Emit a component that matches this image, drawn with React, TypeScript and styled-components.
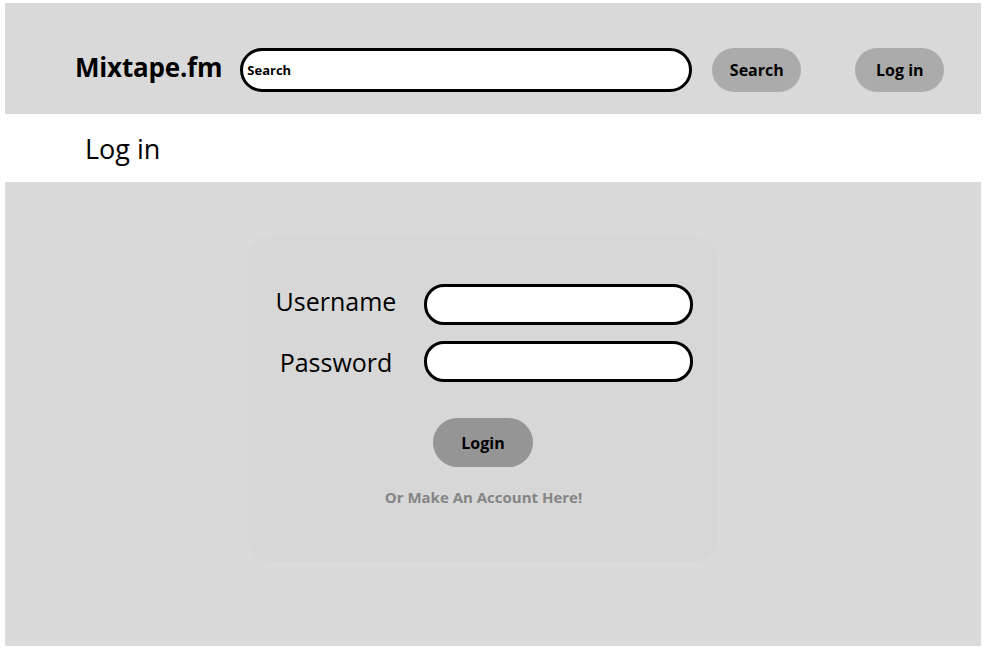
import React from "react";
import styled, { createGlobalStyle } from "styled-components";

const Global = createGlobalStyle`
  html, body { margin: 0; padding: 0; background: #ffffff; }
  body { font-family: "Open Sans", "Liberation Sans", sans-serif; color: #000; }
  * { box-sizing: border-box; }
`;

const Page = styled.div`
  width: 984px;
  height: 648px;
  padding: 3px 3px 2px 5px;
  display: flex;
  flex-direction: column;
  background: #fff;
`;

const Header = styled.header`
  height: 111px;
  background: #d9d9d9;
  display: flex;
  align-items: flex-start;
  padding: 45px 0 0 70px;
`;

const Logo = styled.div`
  font-weight: 700;
  font-size: 26px;
  letter-spacing: -0.2px;
  margin-right: 18px;
  line-height: 36px;
  margin-top: 1px;
`;

const SearchBox = styled.input`
  width: 452px;
  height: 44px;
  border: 3px solid #000;
  border-radius: 22px;
  background: #fff;
  padding: 0 0 0 4px;
  font-family: inherit;
  font-size: 13px;
  font-weight: 700;
  outline: none;
  &::placeholder { color: #000; opacity: 1; }
`;

const PillButton = styled.button<{ $ml: number }>`
  margin-left: ${(p) => p.$ml}px;
  width: 89px;
  height: 44px;
  border: none;
  border-radius: 22px;
  background: #ababab;
  font-family: inherit;
  font-weight: 700;
  font-size: 16px;
  color: #000;
  padding: 0;
`;

const TitleBar = styled.div`
  height: 68px;
  display: flex;
  align-items: center;
  padding-left: 80px;
  font-size: 27px;
  font-weight: 400;
`;

const Content = styled.main`
  flex: 1;
  background: #dadada;
  display: flex;
  justify-content: flex-start;
  align-items: flex-start;
  padding: 54px 0 0 243px;
`;

const Card = styled.section`
  width: 470px;
  height: 326px;
  background: #d7d7d7;
  border-radius: 22px;
  padding: 48px 25px 0 13px;
  display: flex;
  flex-direction: column;
  align-items: center;
`;

const Fields = styled.div`
  display: grid;
  grid-template-columns: 150px 269px;
  column-gap: 13px;
  row-gap: 16px;
  align-items: center;
  align-self: stretch;
`;

const Label = styled.label<{ $dy: number }>`
  text-align: center;
  font-size: 25px;
  transform: translateY(${(p) => p.$dy}px);
`;

const Field = styled.input`
  width: 269px;
  height: 41px;
  border: 3px solid #000;
  border-radius: 20px;
  background: #fff;
  outline: none;
`;

const LoginButton = styled.button`
  margin-top: 36px;
  width: 100px;
  height: 49px;
  border: none;
  border-radius: 25px;
  background: #959595;
  font-family: inherit;
  font-weight: 700;
  font-size: 16px;
  color: #000;
  padding: 0;
  margin-left: 12px;
`;

const AccountLink = styled.a`
  margin-top: 20px;
  margin-left: 13px;
  font-size: 15px;
  font-weight: 700;
  color: #858585;
  text-decoration: none;
`;

export default function App() {
  return (
    <>
      <Global />
      <Page>
        <Header>
          <Logo>Mixtape.fm</Logo>
          <SearchBox placeholder="Search" />
          <PillButton $ml={20}>Search</PillButton>
          <PillButton $ml={54}>Log in</PillButton>
        </Header>
        <TitleBar>Log in</TitleBar>
        <Content>
          <Card>
            <Fields>
              <Label $dy={-4}>Username</Label>
              <Field />
              <Label $dy={0}>Password</Label>
              <Field />
            </Fields>
            <LoginButton>Login</LoginButton>
            <AccountLink href="#">Or Make An Account Here!</AccountLink>
          </Card>
        </Content>
      </Page>
    </>
  );
}
